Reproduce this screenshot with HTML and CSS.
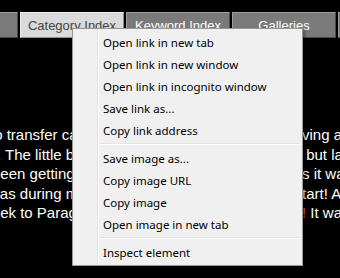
FILE: index.html
```html
<!DOCTYPE html>
<html lang="en">
<head>
    <meta charset="UTF-8">
    <meta name="viewport" content="width=device-width, initial-scale=1.0">
    <title>Travel Journal</title>
    <link rel="stylesheet" href="styles.css">
</head>
<body>
    <div class="tabs">
        <a class="tab">Home</a>
        <a class="tab active">Category Index</a>
        <a class="tab">Keyword Index</a>
        <a class="tab">Galleries</a>
        <a class="tab">Links</a>
    </div>

    <div class="story">
        <div class="line">
            <span class="cut in-10">to transfer cash at the border and we ended up ha</span>
            <span>ving a long wait</span>
        </div>
        <div class="line">
            <span class="cut in-57">highway. The little bus was packed with people and bags,</span>
            <span>&nbsp;but later</span>
        </div>
        <div class="line">
            <span class="cut in-8">been getting used to the heat over the last few days a</span>
            <span>s it was</span>
        </div>
        <div class="line">
            <span class="cut in-11">was during most of the trip, but what a great s</span>
            <span>tart! After</span>
        </div>
        <div class="line">
            <span class="cut in-19">week to Paraguay and back before the rains came</span>
            <span><span class="hot">!</span> It was</span>
        </div>
    </div>

    <ul class="menu">
        <li>Open link in new tab</li>
        <li>Open link in new window</li>
        <li>Open link in incognito window</li>
        <li>Save link as...</li>
        <li>Copy link address</li>
        <li class="sep"></li>
        <li>Save image as...</li>
        <li>Copy image URL</li>
        <li>Copy image</li>
        <li>Open image in new tab</li>
        <li class="sep"></li>
        <li>Inspect element</li>
    </ul>
</body>
</html>
```

FILE: styles.css
```css
* {
    margin: 0;
    padding: 0;
    box-sizing: border-box;
}

body {
    font-family: "Liberation Sans", Arial, sans-serif;
    background: #000;
    color: #fff;
    height: 278px;
    overflow: hidden;
    position: relative;
}

.tabs {
    display: flex;
    gap: 2px;
    margin: 12px 0 0 -86px;
}

.tab {
    flex: 0 0 104px;
    height: 26px;
    display: flex;
    align-items: center;
    justify-content: center;
    font-size: 13px;
    color: #fff;
    background: #7a7a7a;
    border: 1px solid;
    border-color: #9c9c9c #4a4a4a #4a4a4a #9c9c9c;
}

.tab.active {
    background: #dadada;
    color: #444;
    border-color: #f2f2f2 #8c8c8c #8c8c8c #f2f2f2;
}

/* the article text runs on under the menu, only its edges show */
.story {
    margin-top: 87px;
    font-size: 15px;
    line-height: 19.5px;
}

.line {
    display: grid;
    grid-template-columns: 302px auto;
    white-space: nowrap;
}

.cut {
    overflow: hidden;
}

.in-8 { text-indent: -8px; }
.in-10 { text-indent: -10px; }
.in-11 { text-indent: -11px; }
.in-19 { text-indent: -19px; }
.in-57 { text-indent: -57px; }

.hot {
    color: #f05a28;
}

.menu {
    position: absolute;
    left: 72px;
    top: 28px;
    width: 231px;
    list-style: none;
    padding: 3px 2px 1px;
    border: 1px solid #979797;
    background: linear-gradient(to right, #f0f0f0 24px, #e2e3e3 24px 25px, #fff 25px 26px, #f0f0f0 26px);
    box-shadow: 2px 2px 3px rgba(0, 0, 0, 0.4);
    font-family: "Noto Sans", "Segoe UI", sans-serif;
    font-size: 11.5px;
    color: #000;
}

.menu li {
    height: 22px;
    line-height: 22px;
    padding-left: 28px;
    white-space: nowrap;
}

.menu li.sep {
    height: 2px;
    margin: 1px 0 3px 25px;
    padding: 0;
    background: #e2e3e3;
    border-bottom: 1px solid #fff;
}
```
